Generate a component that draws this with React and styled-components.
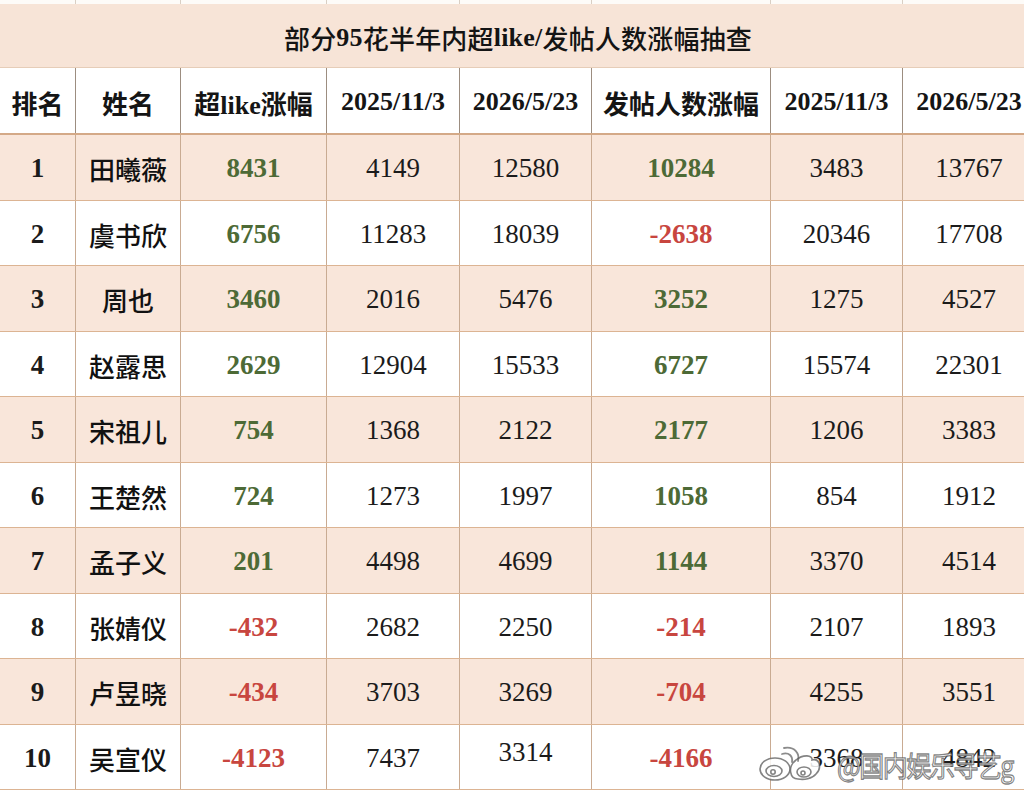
import React from "react";
import styled, { createGlobalStyle } from "styled-components";

const GlobalStyle = createGlobalStyle`
  html, body {
    margin: 0;
    padding: 0;
    background: #ffffff;
    overflow: hidden;
  }
  body {
    font-family: "Liberation Serif", "Noto Sans CJK SC", serif;
    color: #1b1b1b;
  }
`;

const COLS = "76px 105px 146px 133px 132px 179px 132px 133px";

const Page = styled.div`
  position: relative;
  width: 1036px;
  height: 790px;
  overflow: hidden;
`;

const TopStrip = styled.div`
  display: grid;
  grid-template-columns: ${COLS};
  height: 4px;
  background: #fdfbf8;
`;

const StripCell = styled.div`
  border-right: 1px solid #d9cfc4;
`;

const TitleBand = styled.div`
  height: 64px;
  display: flex;
  align-items: center;
  justify-content: center;
  padding-top: 4px;
  box-sizing: border-box;
  background: #f7e4d7;
  border-bottom: 1px solid #e6cdb8;
  font-size: 26px;
  font-weight: 500;
  letter-spacing: 0.2px;
  color: #141414;
`;

const Latin = styled.span`
  font-weight: 700;
`;

const Row = styled.div`
  display: grid;
  grid-template-columns: ${COLS};
  height: ${(p) => p.$h}px;
  background: ${(p) => (p.$shade ? "#f9e6da" : "#ffffff")};
  border-bottom: ${(p) => (p.$head ? "2px solid #d4a987" : "1.5px solid #dcb493")};
  box-sizing: border-box;
`;

const Cell = styled.div`
  display: flex;
  align-items: center;
  justify-content: center;
  border-right: 1px solid ${(p) => (p.$head ? "#9c8d80" : "#c9ab92")};
  font-size: ${(p) => p.$size || 27}px;
  font-weight: ${(p) => (p.$bold ? 700 : 400)};
  color: ${(p) => p.$color || "#1b1b1b"};
  white-space: nowrap;
  padding-top: ${(p) => (p.$lift ? 0 : 3)}px;
  padding-bottom: ${(p) => (p.$lift ? 8 : 0)}px;
`;

const HeadCell = styled(Cell)`
  font-size: 26px;
  font-weight: 700;
  color: #151515;
`;

const Name = styled(Cell)`
  font-family: "Noto Sans CJK SC", sans-serif;
  font-size: 26px;
  font-weight: 500;
  color: #111111;
`;

const Watermark = styled.div`
  position: absolute;
  left: 758px;
  top: 745px;
  display: flex;
  align-items: center;
  gap: 1px;
  pointer-events: none;
`;

const MarkText = styled.span`
  font-family: "Noto Sans CJK SC", sans-serif;
  font-size: 25px;
  font-weight: 400;
  color: rgba(255, 255, 255, 0.82);
  -webkit-text-stroke: 1.1px rgba(90, 90, 90, 0.75);
  letter-spacing: -1.5px;
  display: inline-block;
  transform: scaleY(1.15);
`;

const GREEN = "#4d6a36";
const RED = "#c8463f";

const rows = [
  [1, "田曦薇", 8431, 4149, 12580, 10284, 3483, 13767],
  [2, "虞书欣", 6756, 11283, 18039, -2638, 20346, 17708],
  [3, "周也", 3460, 2016, 5476, 3252, 1275, 4527],
  [4, "赵露思", 2629, 12904, 15533, 6727, 15574, 22301],
  [5, "宋祖儿", 754, 1368, 2122, 2177, 1206, 3383],
  [6, "王楚然", 724, 1273, 1997, 1058, 854, 1912],
  [7, "孟子义", 201, 4498, 4699, 1144, 3370, 4514],
  [8, "张婧仪", -432, 2682, 2250, -214, 2107, 1893],
  [9, "卢昱晓", -434, 3703, 3269, -704, 4255, 3551],
  [10, "吴宣仪", -4123, 7437, 3314, -4166, 3368, 4842],
];

const headers = ["排名", "姓名", "超like涨幅", "2025/11/3", "2026/5/23", "发帖人数涨幅", "2025/11/3", "2026/5/23"];

const WeiboLogo = () => (
  <svg width="78" height="38" viewBox="0 0 78 38">
    <g fill="rgba(255,255,255,0.85)" stroke="rgba(90,90,90,0.75)" strokeWidth="1.6">
      <ellipse cx="17" cy="24" rx="15" ry="11" />
      <ellipse cx="16" cy="26" rx="8" ry="5.5" />
      <circle cx="15" cy="27" r="2.2" />
      <path d="M40 34 C 32 34 29 22 38 15 C 45 9 55 10 54 15 C 62 13 64 23 58 29 C 54 34 46 35 40 34 Z" />
      <ellipse cx="46" cy="27" rx="7" ry="5" />
      <circle cx="45" cy="28" r="2" />
    </g>
    <g fill="none" stroke="rgba(90,90,90,0.7)" strokeWidth="1.8" strokeLinecap="round">
      <path d="M24 9 C 31 7 35 11 34 17" />
      <path d="M26 3 C 37 1 42 9 40 16" />
    </g>
  </svg>
);

const renderDelta = (v) => (
  <Cell $bold $color={v < 0 ? RED : GREEN}>
    {v}
  </Cell>
);

export default function App() {
  return (
    <Page>
      <GlobalStyle />
      <TopStrip>
        {headers.map((h, i) => (
          <StripCell key={i} />
        ))}
      </TopStrip>
      <TitleBand>
        部分<Latin>95</Latin>花半年内超<Latin>like/</Latin>发帖人数涨幅抽查
      </TitleBand>
      <Row $h={67} $head>
        {headers.map((h, i) => (
          <HeadCell key={i} $head>
            {h}
          </HeadCell>
        ))}
      </Row>
      {rows.map((r, i) => (
        <Row key={r[0]} $h={65.5} $shade={i % 2 === 0}>
          <Cell $bold>{r[0]}</Cell>
          <Name>{r[1]}</Name>
          {renderDelta(r[2])}
          <Cell>{r[3]}</Cell>
          <Cell $lift={r[0] === 10}>{r[4]}</Cell>
          {renderDelta(r[5])}
          <Cell>{r[6]}</Cell>
          <Cell>{r[7]}</Cell>
        </Row>
      ))}
      <Watermark>
        <WeiboLogo />
        <MarkText>@国内娱乐寻艺g</MarkText>
      </Watermark>
    </Page>
  );
}
